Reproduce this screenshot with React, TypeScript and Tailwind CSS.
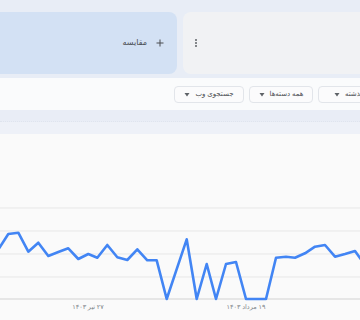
import React from "react";

// weekly interest points, in page coordinates (chart starts at y=134)
const POINTS: [number, number][] = [
  [-2, 250], [8.3, 234], [18.3, 232.7], [28.3, 251.7], [38.3, 242.7], [48.3, 256],
  [58.3, 252], [68.3, 248.3], [78.3, 259], [88.3, 254], [97.3, 257.7], [107.3, 245],
  [117.3, 257.3], [127.3, 260], [137.3, 249.3], [147.3, 260.3], [156.7, 260.3],
  [166.7, 299], [176.7, 269.2], [186.7, 239.3], [196.7, 299], [206.7, 264], [216, 299],
  [226, 264], [236, 262], [246, 299], [256, 299], [266, 299], [276, 257.7], [286, 256.7],
  [295, 257.7], [305, 253.3], [315, 246.7], [325, 245], [335, 256.7], [345, 254],
  [355, 251], [365, 265],
];

const TOP = 134;
const GRID = [208, 231, 254, 277];
const BASE = 299;

function Caret() {
  return (
    <svg width="6" height="4" viewBox="0 0 6 4" className="shrink-0">
      <path d="M0.5 0h5L3 3.5z" fill="#5f6368" />
    </svg>
  );
}

function Chip({ label, className }: { label: string; className: string }) {
  return (
    <div
      className={`flex h-[17px] shrink-0 items-center gap-[5px] rounded-[4px] border border-[#e2e5ea] bg-[#fbfbfc] ${className}`}
    >
      <Caret />
      <span dir="rtl" className="whitespace-nowrap text-[7px] leading-none text-[#4a4d51]">
        {label}
      </span>
    </div>
  );
}

function Chart() {
  const d = POINTS.map(([x, y], i) => `${i ? "L" : "M"}${x} ${y - TOP}`).join(" ");
  return (
    <svg width="360" height="186" className="block">
      {GRID.map((y) => (
        <line key={y} x1="0" x2="360" y1={y - TOP} y2={y - TOP} stroke="#e7e7e7" strokeWidth="1" />
      ))}
      <line x1="0" x2="360" y1={BASE - TOP} y2={BASE - TOP} stroke="#d2d2d2" strokeWidth="1" />
      <path d={d} fill="none" stroke="#4285f4" strokeWidth="2.6" strokeLinejoin="round" />
      <text x="88" y="175" direction="rtl" textAnchor="middle" fontSize="6.5" fill="#80868b">
        ۲۷ تیر ۱۴۰۳
      </text>
      <text x="246" y="175" direction="rtl" textAnchor="middle" fontSize="6.5" fill="#80868b">
        ۱۹ مرداد ۱۴۰۳
      </text>
    </svg>
  );
}

export default function App() {
  return (
    <div className="h-[320px] w-[360px] overflow-hidden bg-[#fafafa] font-['Roboto','DejaVu_Sans',sans-serif]">
      <div className="flex h-[78px] gap-[6px] bg-[#e8edf6] pt-[12px]">
        <div className="ml-[-23px] flex h-[62px] w-[200px] shrink-0 items-center justify-end gap-[9px] rounded-[8px] bg-[#d3e1f4] pr-[13px]">
          <span dir="rtl" className="text-[8px] leading-none text-[#4a4d51]">مقایسه</span>
          <svg width="8" height="8" viewBox="0 0 8 8">
            <path d="M4 0.5v7M0.5 4h7" stroke="#4a4d51" strokeWidth="1" />
          </svg>
        </div>
        <div className="flex h-[62px] w-[200px] shrink-0 items-center rounded-[8px] bg-[#f1f2f4] pl-[12px]">
          <div className="flex flex-col gap-[1px]">
            <span className="h-[2px] w-[2px] rounded-full bg-[#5f6368]" />
            <span className="h-[2px] w-[2px] rounded-full bg-[#5f6368]" />
            <span className="h-[2px] w-[2px] rounded-full bg-[#5f6368]" />
          </div>
        </div>
      </div>

      <div className="flex h-[32px] items-start gap-[5px] bg-[#fafbfc] pl-[174px] pt-[8px]">
        <Chip label="جستجوی وب" className="w-[70px] justify-center" />
        <Chip label="همه دسته‌ها" className="w-[64px] justify-center" />
        <Chip label="۱۲ ماه گذشته" className="w-[80px] pl-[15px]" />
      </div>

      <div className="h-[12px] border-b border-dotted border-[#dfe4ee] bg-[#e9edf6]" />
      <div className="h-[12px] bg-[#eef1f8]" />

      <Chart />
    </div>
  );
}
